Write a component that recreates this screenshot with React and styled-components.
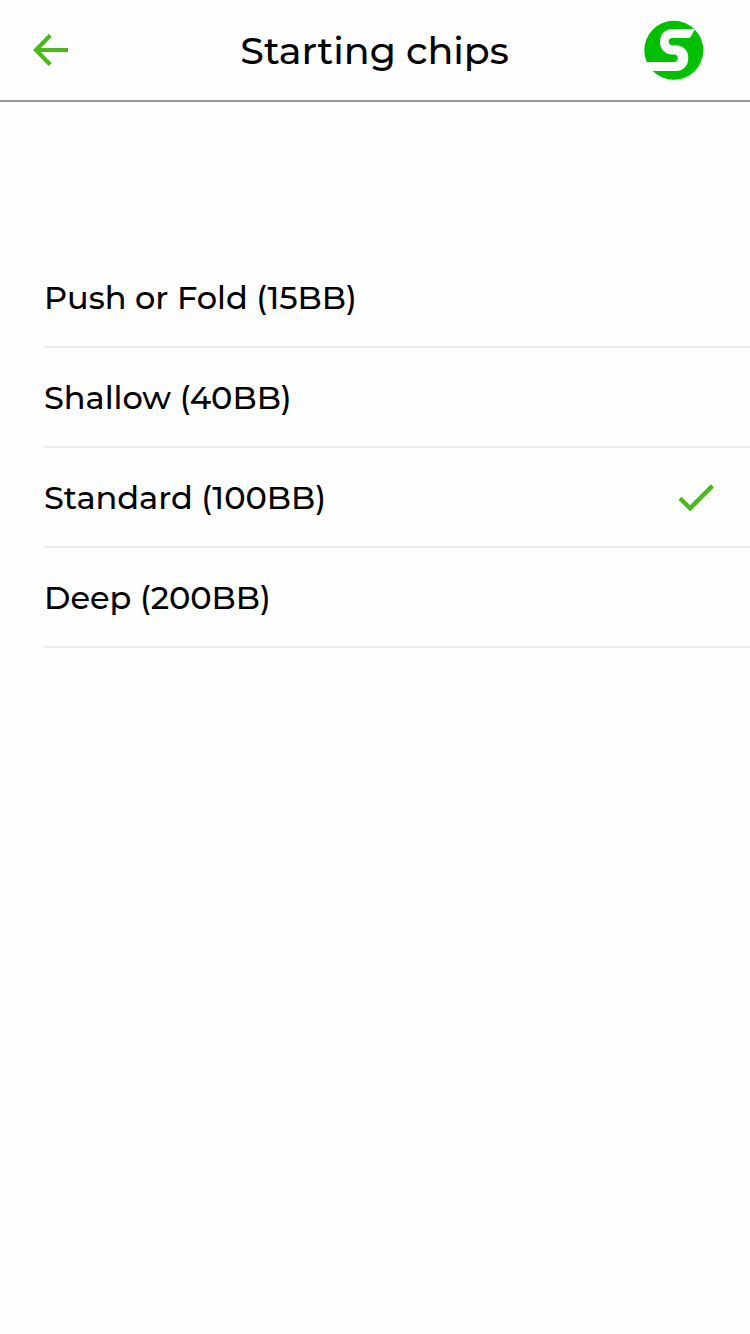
import React from "react"
import styled, { createGlobalStyle } from "styled-components"

const options = [
  { label: "Push or Fold (15BB)" },
  { label: "Shallow (40BB)" },
  { label: "Standard (100BB)", selected: true },
  { label: "Deep (200BB)" },
]

export default function App() {
  return (
    <Screen>
      <GlobalStyle />
      <Header>
        <BackButton aria-label="Back">
          <BackIcon />
        </BackButton>
        <Title>Starting chips</Title>
        <Logo />
      </Header>
      <OptionList>
        {options.map(option => (
          <Option key={option.label}>
            <OptionLabel>{option.label}</OptionLabel>
            {option.selected && <CheckIcon />}
          </Option>
        ))}
      </OptionList>
    </Screen>
  )
}

function BackIcon() {
  return (
    <svg width="36" height="32" viewBox="0 0 36 32" fill="none">
      <path d="M17.2 1.5L2.900 16L17.200 30.500M3 16H35" stroke="#4bb91b" strokeWidth="4.2" />
    </svg>
  )
}

function CheckIcon() {
  return (
    <svg width="36" height="28" viewBox="0 0 36 28" fill="none">
      <path d="M2 14.300L12 24.300L34.400 1.900" stroke="#4bb91b" strokeWidth="4.4" />
    </svg>
  )
}

function Logo() {
  return (
    <svg width="60" height="60" viewBox="0 0 60 60">
      <circle cx="29.8" cy="30.3" r="29.5" fill="#00c000" />
      <path
        d="M51 9H28A12 12 0 0 0 16 21V22.4A12 12 0 0 0 28 34.400H30A3.800 3.800 0 0 1 30 42H0V51H32.200A12 12 0 0 0 44.200 39V37.200A12 12 0 0 0 32.200 25.200H28.300A3.600 3.600 0 0 1 28.300 18H46Z"
        fill="#fefefe"
      />
    </svg>
  )
}

const GlobalStyle = createGlobalStyle`
  * {
    box-sizing: border-box;
  }

  body {
    margin: 0;
    background: #fefefe;
  }
`

const Screen = styled.div`
  min-height: 100vh;
  background: #fefefe;
  color: #000000;
  font-family: Montserrat, Inter, sans-serif;
`

const Header = styled.header`
  height: 102px;
  padding: 0 46px 0 33px;
  border-bottom: 2px solid #979797;
  display: grid;
  grid-template-columns: 60px auto 60px;
  align-items: center;
`

const BackButton = styled.button`
  padding: 0;
  border: 0;
  background: none;
  display: flex;
`

const Title = styled.h1`
  margin: 0 0 0 12px;
  padding-top: 2px;
  font-size: 38px;
  font-weight: 500;
  line-height: 48px;
  letter-spacing: -0.05px;
  text-align: center;
  white-space: nowrap;
`

const OptionList = styled.ul`
  margin: 146px 0 0 44px;
  padding: 0;
  list-style: none;
`

const Option = styled.li`
  height: 100px;
  padding: 2px 36px 0 0;
  border-bottom: 2px solid #ebebeb;
  display: flex;
  align-items: center;
  justify-content: space-between;
`

const OptionLabel = styled.span`
  font-size: 32px;
  font-weight: 500;
  line-height: 40px;
  letter-spacing: -0.03px;
  white-space: nowrap;
`
